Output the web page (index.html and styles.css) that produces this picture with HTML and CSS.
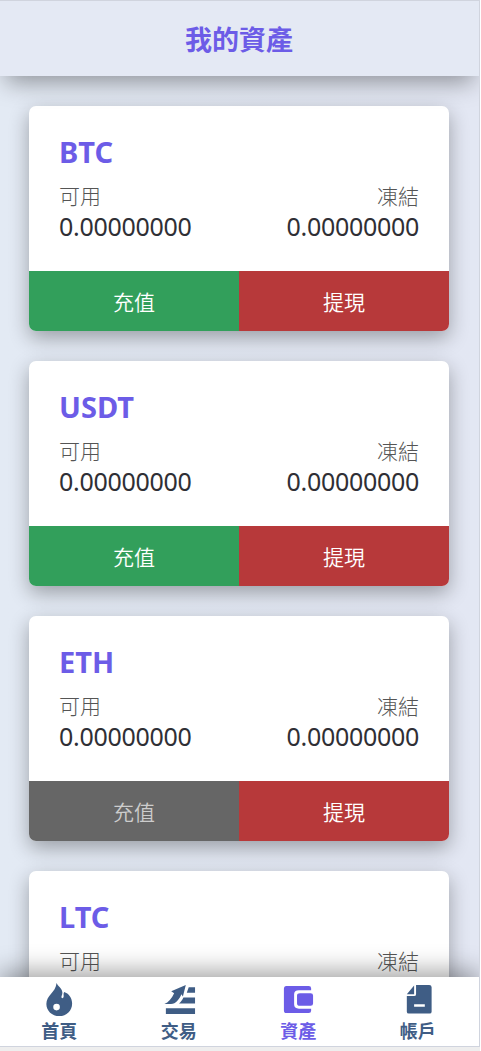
FILE: index.html
```html
<!DOCTYPE html>
<html lang="zh-Hant">
<head>
<meta charset="utf-8">
<title>我的資產</title>
<link rel="stylesheet" href="styles.css">
</head>
<body>
<div class="app">
  <header class="header"><h1 class="title">我的資產</h1></header>
  <main class="list">
    <section class="card">
      <div class="info">
        <h2 class="coin">BTC</h2>
        <div class="labels"><span>可用</span><span>凍結</span></div>
        <div class="values"><span>0.00000000</span><span>0.00000000</span></div>
      </div>
      <div class="actions"><button class="btn deposit">充值</button><button class="btn withdraw">提現</button></div>
    </section>
    <section class="card">
      <div class="info">
        <h2 class="coin">USDT</h2>
        <div class="labels"><span>可用</span><span>凍結</span></div>
        <div class="values"><span>0.00000000</span><span>0.00000000</span></div>
      </div>
      <div class="actions"><button class="btn deposit">充值</button><button class="btn withdraw">提現</button></div>
    </section>
    <section class="card">
      <div class="info">
        <h2 class="coin">ETH</h2>
        <div class="labels"><span>可用</span><span>凍結</span></div>
        <div class="values"><span>0.00000000</span><span>0.00000000</span></div>
      </div>
      <div class="actions"><button class="btn disabled">充值</button><button class="btn withdraw">提現</button></div>
    </section>
    <section class="card">
      <div class="info">
        <h2 class="coin">LTC</h2>
        <div class="labels"><span>可用</span><span>凍結</span></div>
      </div>
    </section>
  </main>
  <nav class="nav">
    <a class="tab">
      <svg class="icon" viewBox="0 0 36 36"><path fill-rule="evenodd" d="M15.500 1C16.500 4 21.500 6.500 21.500 11C21.500 13.500 20.200 14.500 20.600 16C21 17.400 22.600 16.800 22.800 15C23 13.300 22.200 12 23.300 10.200C28 11.500 31.500 16.500 31.500 22C31.500 29.500 25.800 35 18.300 35C10.800 35 5 29.500 5 22.500C5 13.500 14.500 11 15.500 1ZM15.500 22.400A3.400 3.400 0 1 0 15.500 29.200A3.400 3.400 0 1 0 15.500 22.400Z"/></svg>
      <span>首頁</span>
    </a>
    <a class="tab">
      <svg class="icon" viewBox="0 0 36 36"><path d="M3 22.500C7 21 10.500 17 13 11.500L10 9.500L25 3L22 15L20.500 12.500C18 18 14.500 23 9 22.500ZM28 5.500H34.500V11H26ZM22.500 16H34.500V22H18C20 20.500 21.500 18.500 22.500 16ZM4.500 27H34.500V33H4.500Z"/></svg>
      <span>交易</span>
    </a>
    <a class="tab active">
      <svg class="icon" viewBox="0 0 36 36"><path d="M6 4H29Q31.500 4 31.500 6.500V8.500H19Q14 8.500 14 12.500V23Q14 27.500 19 27.500H31.500V29.500Q31.500 32 29 32H6Q3.500 32 3.500 29V7Q3.500 4 6 4ZM20 11.500H31Q33.500 11.500 33.500 14V22Q33.500 24.500 31 24.500H20Q17 24.500 17 22V14Q17 11.500 20 11.500Z"/></svg>
      <span>資產</span>
    </a>
    <a class="tab">
      <svg class="icon" viewBox="0 0 36 36"><path fill-rule="evenodd" d="M16 3H29.500Q32 3 32 5.500V30.500Q32 32.500 30 32.500H8.500Q6.500 32.500 6.500 30.500V14.500H14Q16 14.500 16 12.500ZM14 23V25.500H25V23ZM14 3.500V12.500H6.500Z"/></svg>
      <span>帳戶</span>
    </a>
  </nav>
</div>
</body>
</html>
```
FILE: styles.css
```css
* { box-sizing: border-box; }
body {
  margin: 0;
  height: 1051px;
  overflow: hidden;
  background: #eee;
  border-right: 1px solid #fff;
  font-family: "Noto Sans", "Noto Sans CJK TC", sans-serif;
}
.app {
  display: flex;
  flex-direction: column;
  height: 1047px;
  overflow: hidden;
  border: solid #d0d4de;
  border-width: 1px 1px 1px 0;
  background: linear-gradient(90deg, #e3eaf4, #e3e7f3);
}
.header {
  z-index: 1;
  flex: none;
  display: flex;
  align-items: center;
  justify-content: center;
  height: 75px;
  background: #e4e9f4;
  box-shadow: 0 12px 24px -6px rgba(0, 0, 0, .38);
}
.title {
  margin: 0;
  padding: 2px 1px 0 0;
  font-size: 27px;
  line-height: 40px;
  color: #6c5ce7;
}
.list {
  flex: 1;
  min-height: 0;
  display: flex;
  flex-direction: column;
  gap: 30px;
  padding: 30px 30px 0 29px;
}
.card {
  flex: none;
  display: flex;
  flex-direction: column;
  height: 225px;
  overflow: hidden;
  border-radius: 7px;
  background: #fff;
  box-shadow: 0 7px 20px rgba(0, 0, 0, .32);
}
.info {
  flex: 1;
  padding: 25px 30px 0;
}
.coin {
  margin: 0;
  font-size: 29px;
  line-height: 41px;
  color: #6c5ce7;
}
.labels, .values {
  display: flex;
  justify-content: space-between;
}
.labels {
  padding-top: 9px;
  font-size: 21px;
  line-height: 30px;
  font-weight: 300;
  color: #555;
}
.values {
  font-size: 25px;
  line-height: 30px;
  letter-spacing: -.3px;
  color: #2f2f35;
}
.actions {
  display: flex;
  height: 60px;
}
.btn {
  flex: 1;
  border: 0;
  padding: 0 0 1px;
  font: 350 21px "Noto Sans CJK TC", sans-serif;
  color: #fff;
}
.deposit { background: #329f5b; }
.withdraw { background: #b7393a; }
.disabled { background: #666; color: #ccc; }
.nav {
  z-index: 1;
  flex: none;
  display: flex;
  height: 69px;
  padding-right: 1px;
  background: #fff;
  box-shadow: 0 -6px 24px rgba(0, 0, 0, .36);
}
.tab {
  flex: 1;
  display: flex;
  flex-direction: column;
  align-items: center;
  padding: 5px 1px 0 0;
  font-size: 18px;
  line-height: 29px;
  font-weight: 700;
  color: #3f5d85;
}
.active { color: #6c5ce7; }
.icon {
  width: 36px;
  height: 36px;
  fill: currentColor;
}
```
